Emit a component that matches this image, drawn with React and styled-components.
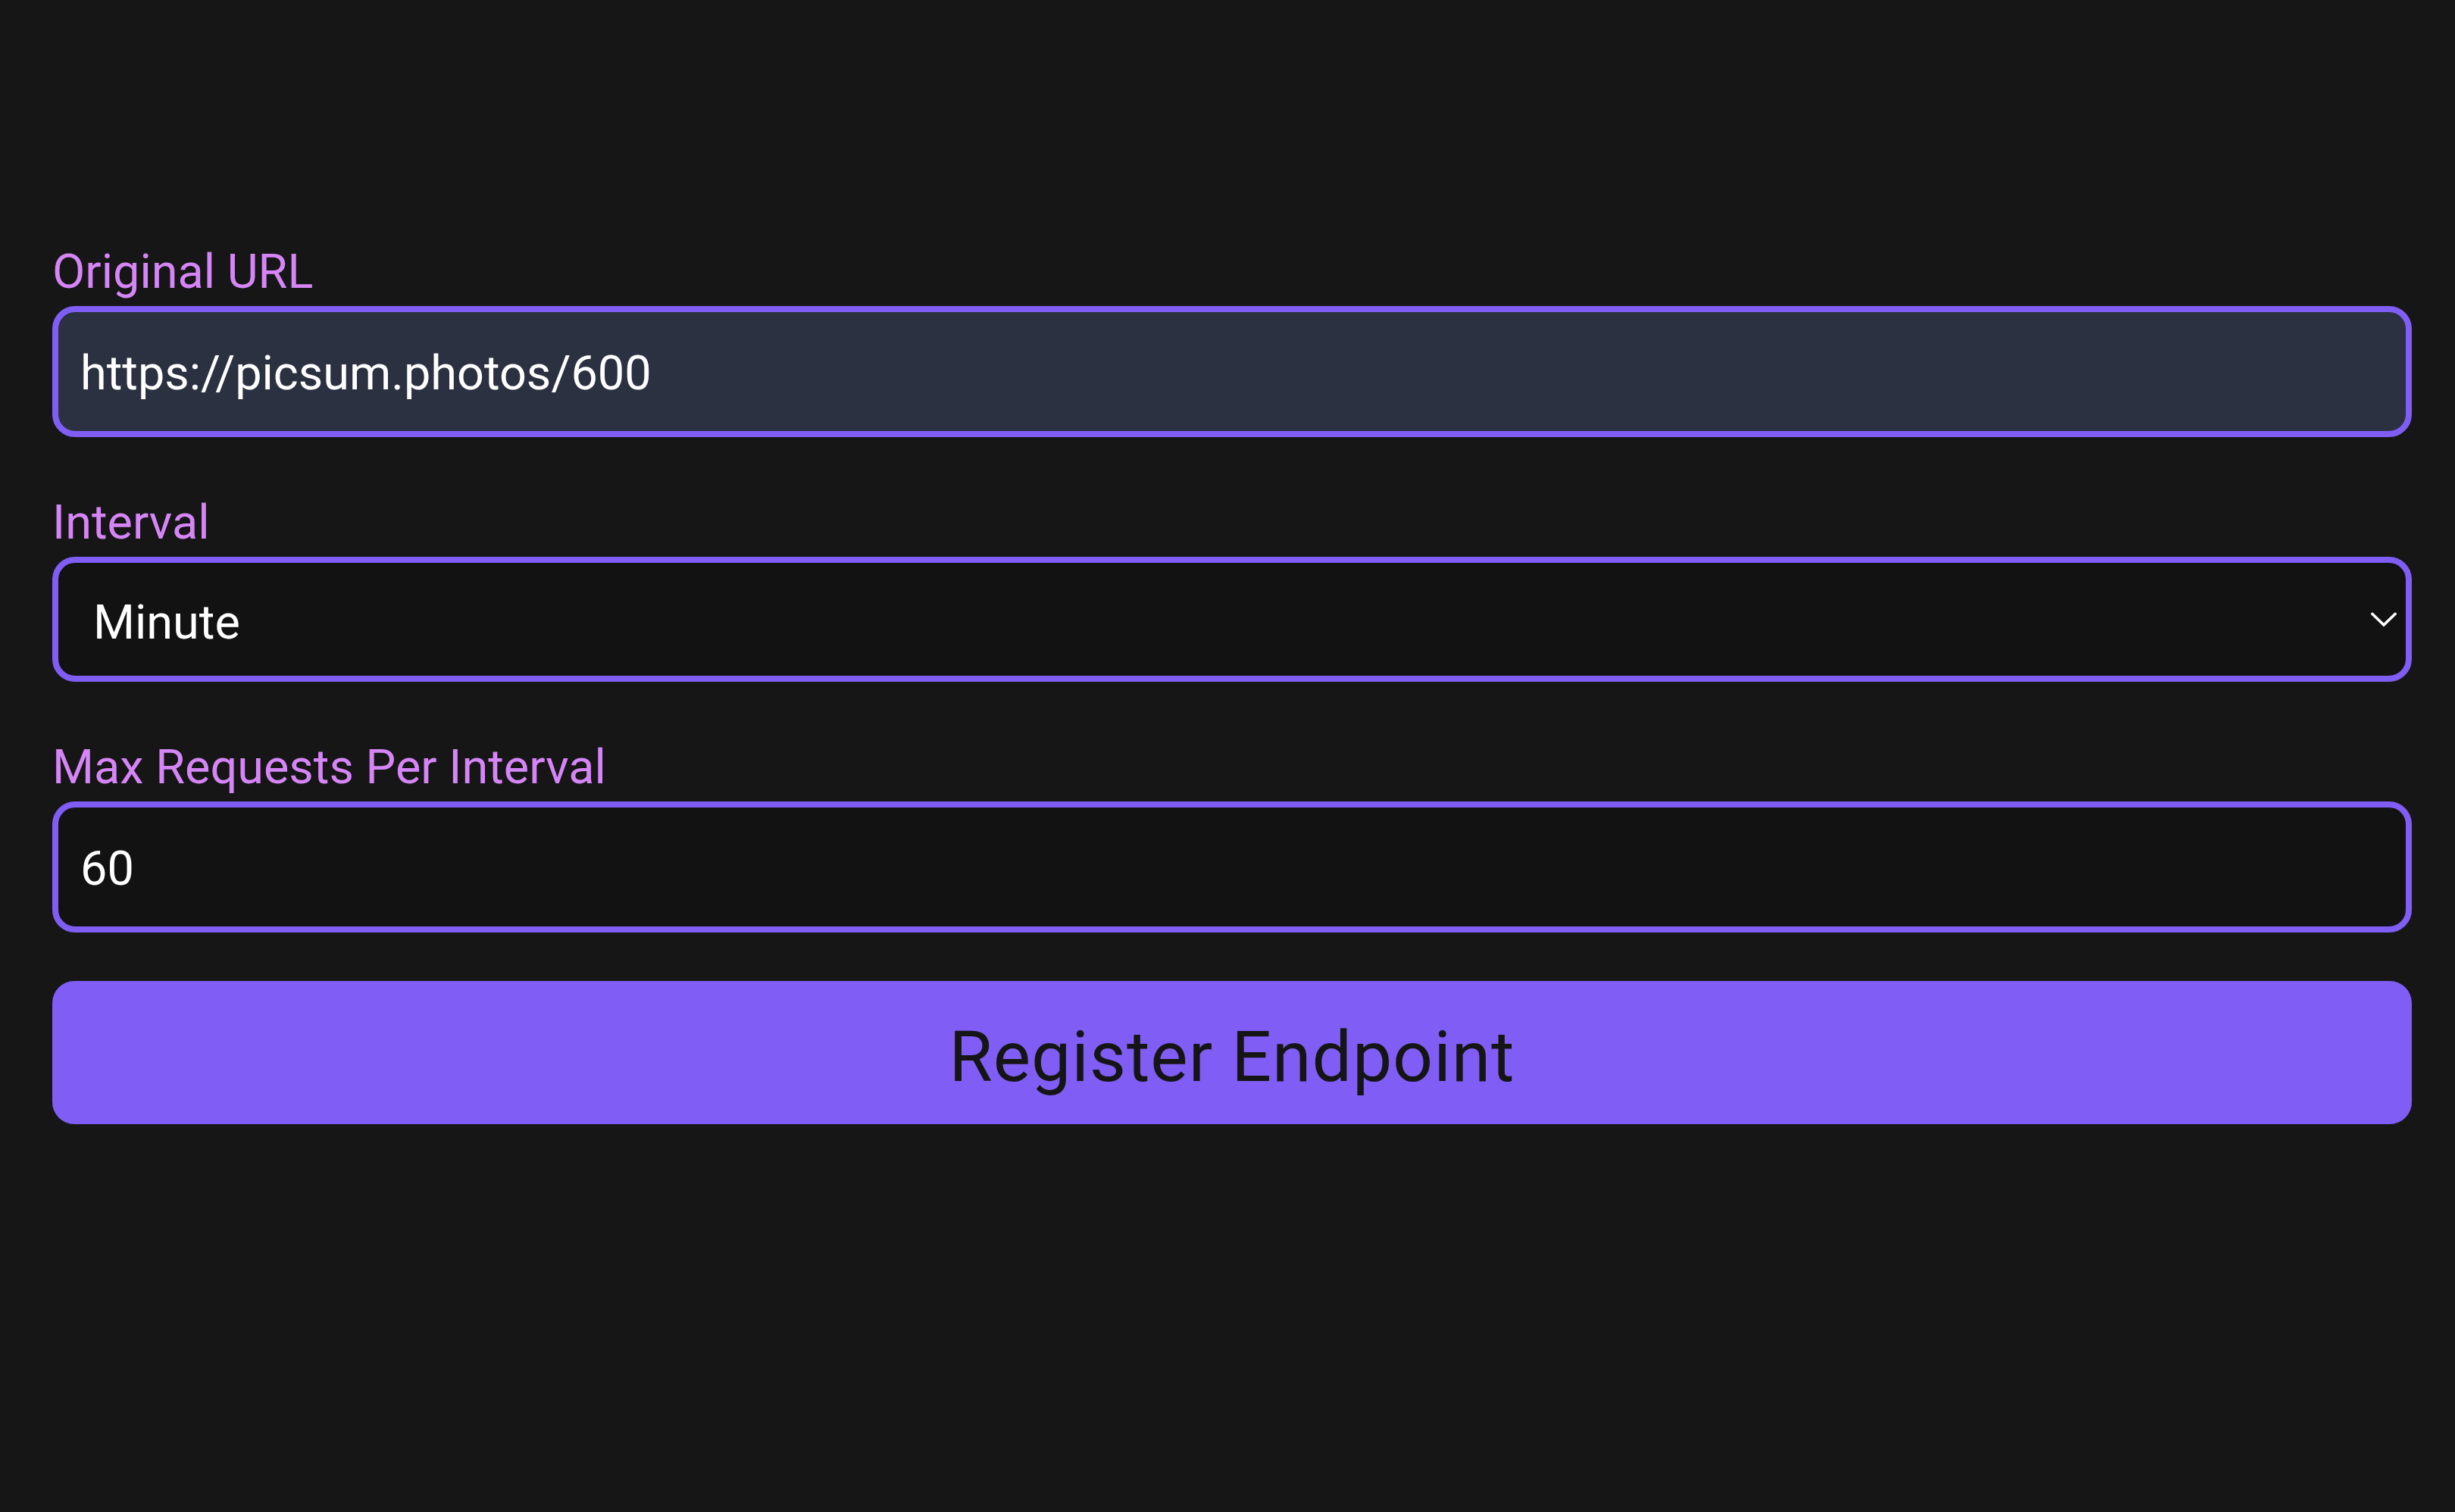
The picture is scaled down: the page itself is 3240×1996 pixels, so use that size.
import React from "react";
import styled, { createGlobalStyle } from "styled-components";

const GlobalStyle = createGlobalStyle`
  html, body {
    margin: 0;
    padding: 0;
    background: #161616;
  }
  body {
    font-family: Roboto, "Liberation Sans", Arial, sans-serif;
    min-height: 100vh;
  }
  * { box-sizing: border-box; }
`;

const Page = styled.main`
  min-height: 100vh;
  padding: 327px 57px 0 69px;
  background: #161616;
`;

const Form = styled.form`
  display: flex;
  flex-direction: column;
  gap: 64px;
`;

const Fields = styled.div`
  display: flex;
  flex-direction: column;
  gap: 81px;
`;

const Field = styled.div`
  display: flex;
  flex-direction: column;
  gap: 14px;
`;

const Label = styled.label`
  display: block;
  font-size: 63px;
  line-height: 63px;
  font-weight: 400;
  color: #d685f7;
  white-space: nowrap;
`;

const TextInput = styled.input`
  display: block;
  width: 100%;
  height: ${(p) => p.$height}px;
  margin: 0;
  padding: 4px 29px 0;
  border: 8px solid #805ef5;
  border-radius: 30px;
  background: ${(p) => (p.$filled ? "#2b3141" : "#121212")};
  color: #ffffff;
  font-family: inherit;
  font-size: 63px;
  font-weight: 400;
  outline: none;
`;

const SelectWrap = styled.div`
  position: relative;
  width: 100%;
`;

const Select = styled.select`
  display: block;
  width: 100%;
  height: 165px;
  margin: 0;
  padding: 8px 80px 0 46px;
  border: 8px solid #805ef5;
  border-radius: 30px;
  background: #121212;
  color: #ffffff;
  font-family: inherit;
  font-size: 63px;
  font-weight: 400;
  appearance: none;
  -webkit-appearance: none;
  outline: none;
`;

const Chevron = styled.svg`
  position: absolute;
  right: 20px;
  top: 50%;
  width: 34px;
  height: 19px;
  transform: translateY(-50%);
  pointer-events: none;
`;

const SubmitButton = styled.button`
  display: flex;
  align-items: center;
  justify-content: center;
  width: 100%;
  height: 189px;
  margin: 0;
  padding: 12px 0 0;
  border: none;
  border-radius: 29px;
  background: #805ef5;
  color: #151515;
  font-family: inherit;
  font-size: 93px;
  font-weight: 400;
  letter-spacing: 1px;
  cursor: pointer;
`;

export default function App() {
  return (
    <>
      <GlobalStyle />
      <Page>
        <Form onSubmit={(e) => e.preventDefault()}>
          <Fields>
            <Field>
              <Label htmlFor="url">Original URL</Label>
              <TextInput
                id="url"
                type="text"
                $height={173}
                $filled
                defaultValue="https://picsum.photos/600"
              />
            </Field>
            <Field>
              <Label htmlFor="interval">Interval</Label>
              <SelectWrap>
                <Select id="interval" defaultValue="minute">
                  <option value="second">Second</option>
                  <option value="minute">Minute</option>
                  <option value="hour">Hour</option>
                  <option value="day">Day</option>
                </Select>
                <Chevron viewBox="0 0 34 19" fill="none">
                  <polyline
                    points="2,2 17,16.5 32,2"
                    stroke="#ffffff"
                    strokeWidth="3.5"
                    strokeLinecap="square"
                    strokeLinejoin="miter"
                  />
                </Chevron>
              </SelectWrap>
            </Field>
            <Field>
              <Label htmlFor="max">Max Requests Per Interval</Label>
              <TextInput id="max" type="number" $height={173} defaultValue="60" />
            </Field>
          </Fields>
          <SubmitButton type="submit">Register Endpoint</SubmitButton>
        </Form>
      </Page>
    </>
  );
}
